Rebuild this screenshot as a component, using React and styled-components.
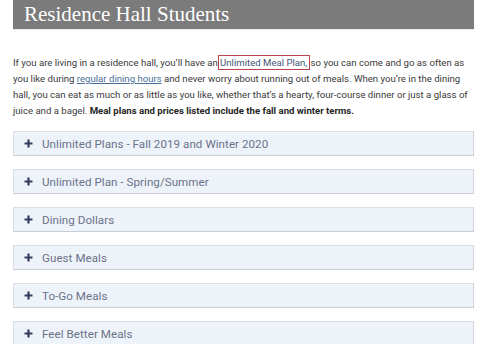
import React from "react";
import styled, { createGlobalStyle } from "styled-components";

const Global = createGlobalStyle`
  html, body { margin: 0; padding: 0; background: #ffffff; }
  body { font-family: Roboto, "Liberation Sans", sans-serif; }
`;

const Page = styled.div`
  width: 487px;
  height: 344px;
  overflow: hidden;
  padding: 0 13px;
  box-sizing: border-box;
`;

const Header = styled.h1`
  margin: 0;
  height: 29px;
  background: #7b7b7b;
  color: #ffffff;
  font-family: "Liberation Serif", "Times New Roman", serif;
  font-weight: 400;
  font-size: 21px;
  line-height: 29px;
  padding: 0 11px;
  box-shadow: 0 1px 1px rgba(0, 0, 0, 0.08);
`;

const Intro = styled.p`
  margin: 26px 0 0;
  font-size: 9.6px;
  line-height: 16px;
  color: #3a3a3a;
`;

const Marked = styled.span`
  outline: 1px solid #b8424e;
  outline-offset: 1px;
  padding: 0 1px 0 0;
  color: #3f5575;
`;

const Link = styled.a`
  color: #4b6f99;
  text-decoration: underline;
`;

const Strong = styled.strong`
  font-weight: 700;
  color: #262626;
`;

const List = styled.div`
  margin-top: 12px;
  display: flex;
  flex-direction: column;
  gap: 13px;
`;

const Item = styled.div`
  height: 25px;
  box-sizing: border-box;
  background: #eef3fa;
  border: 1px solid #dadee6;
  border-bottom-color: #c9cdd4;
  border-right-color: #cfd3da;
  display: flex;
  align-items: center;
  padding-left: 10px;
  gap: 9px;
`;

const Label = styled.span`
  font-size: 11.6px;
  color: #6b7288;
  letter-spacing: 0.05px;
`;

const Plus = () => (
  <svg width="9" height="9" viewBox="0 0 9 9" style={{ flex: "none" }}>
    <path d="M4.5 0.5v8M0.5 4.5h8" stroke="#343d60" strokeWidth="2.2" />
  </svg>
);

const items = [
  "Unlimited Plans - Fall 2019 and Winter 2020",
  "Unlimited Plan - Spring/Summer",
  "Dining Dollars",
  "Guest Meals",
  "To-Go Meals",
  "Feel Better Meals",
];

export default function App() {
  return (
    <>
      <Global />
      <Page>
        <Header>Residence Hall Students</Header>
        <Intro>
          If you are living in a residence hall, you’ll have an{" "}
          <Marked>Unlimited Meal Plan,</Marked> so you can come and go as often as
          you like during <Link href="#">regular dining hours</Link> and never worry
          about running out of meals. When you’re in the dining hall, you can eat as
          much or as little as you like, whether that’s a hearty, four-course dinner
          or just a glass of juice and a bagel.{" "}
          <Strong>Meal plans and prices listed include the fall and winter terms.</Strong>
        </Intro>
        <List>
          {items.map((t) => (
            <Item key={t}>
              <Plus />
              <Label>{t}</Label>
            </Item>
          ))}
        </List>
      </Page>
    </>
  );
}
